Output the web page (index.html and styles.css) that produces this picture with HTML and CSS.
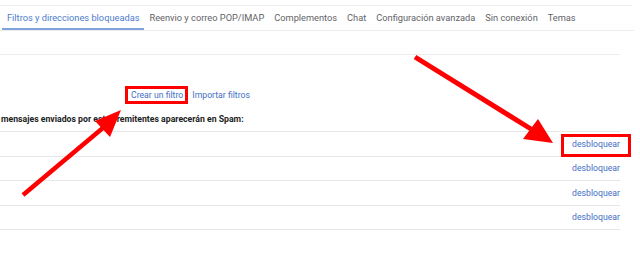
FILE: index.html
```html
<!DOCTYPE html>
<html lang="es">

<head>
    <meta charset="UTF-8">
    <meta name="viewport" content="width=device-width, initial-scale=1.0">
    <title>Filtros y direcciones bloqueadas</title>
    <link rel="stylesheet" href="styles.css">
</head>

<body>
    <div class="page">
        <div class="topbar"></div>

        <nav class="tabs">
            <a class="tab active">Filtros y direcciones bloqueadas</a>
            <a class="tab">Reenvio y correo POP/IMAP</a>
            <a class="tab">Complementos</a>
            <a class="tab">Chat</a>
            <a class="tab">Configuración avanzada</a>
            <a class="tab">Sin conexión</a>
            <a class="tab">Temas</a>
        </nav>

        <div class="divider"></div>

        <div class="actions">
            <a class="link marked create">Crear un filtro</a>
            <a class="link">Importar filtros</a>
        </div>

        <p class="note">mensajes enviados por estos remitentes aparecerán en Spam:</p>

        <div class="blocked">
            <div class="row"><a class="link marked unblock">desbloquear</a></div>
            <div class="row"><a class="link">desbloquear</a></div>
            <div class="row"><a class="link">desbloquear</a></div>
            <div class="row"><a class="link">desbloquear</a></div>
        </div>

        <!-- annotation arrows -->
        <svg class="arrows" width="640" height="278" viewBox="0 0 640 278">
            <line x1="23" y1="195" x2="104" y2="127" stroke="#ff0000" stroke-width="4.5" />
            <polygon points="121,110 95,121 110,137" fill="#ff0000" />
            <line x1="415" y1="57" x2="531" y2="129" stroke="#ff0000" stroke-width="5" />
            <polygon points="553,143 523,139 538,119" fill="#ff0000" />
        </svg>
    </div>
</body>

</html>
```

FILE: styles.css
```css
body {
    margin: 0;
    background-color: #ffffff;
    font-family: Roboto, 'Liberation Sans', sans-serif;
    color: #202124;
}

.page {
    position: relative;
    width: 640px;
    height: 278px;
    overflow: hidden;
}

.topbar {
    width: 632px;
    height: 5px;
    border-bottom: 1px solid #ededed;
}

.tabs {
    display: flex;
    width: 632px;
    height: 24px;
    padding-left: 2px;
    box-sizing: content-box;
    border-bottom: 1px solid #ececec;
}

.tab {
    display: flex;
    align-items: center;
    padding: 0 5px;
    font-size: 9.25px;
    color: #5f6368;
    white-space: nowrap;
    border-bottom: 2px solid transparent;
}

.tab.active {
    color: #4d7ccc;
    border-bottom-color: #7fa2dc;
}

.divider {
    width: 620px;
    height: 23px;
    border-bottom: 1px solid #ececec;
}

.actions {
    display: flex;
    gap: 9px;
    margin-top: 33px;
    padding-left: 131px;
    line-height: 14px;
}

.link {
    font-size: 8.7px;
    color: #3f6fc3;
    white-space: nowrap;
}

.marked {
    position: relative;
}

.marked::after {
    content: "";
    position: absolute;
    border: 3px solid #ff0000;
}

.create::after {
    top: -2px;
    bottom: -2px;
    left: -6px;
    right: -5px;
}

.unblock::after {
    top: -3px;
    bottom: -6px;
    left: -11px;
    right: -11px;
}

.note {
    margin: 10px 0 5px;
    padding-left: 1px;
    font-size: 8.7px;
    font-weight: 700;
    line-height: 14px;
    color: #222222;
}

.blocked {
    width: 620px;
    border-bottom: 1px solid #e6e6e6;
}

.row {
    display: flex;
    justify-content: flex-end;
    align-items: center;
    height: 23.5px;
    line-height: 14px;
    border-top: 1px solid #e6e6e6;
}

.arrows {
    position: absolute;
    top: 0;
    left: 0;
    pointer-events: none;
}
```
